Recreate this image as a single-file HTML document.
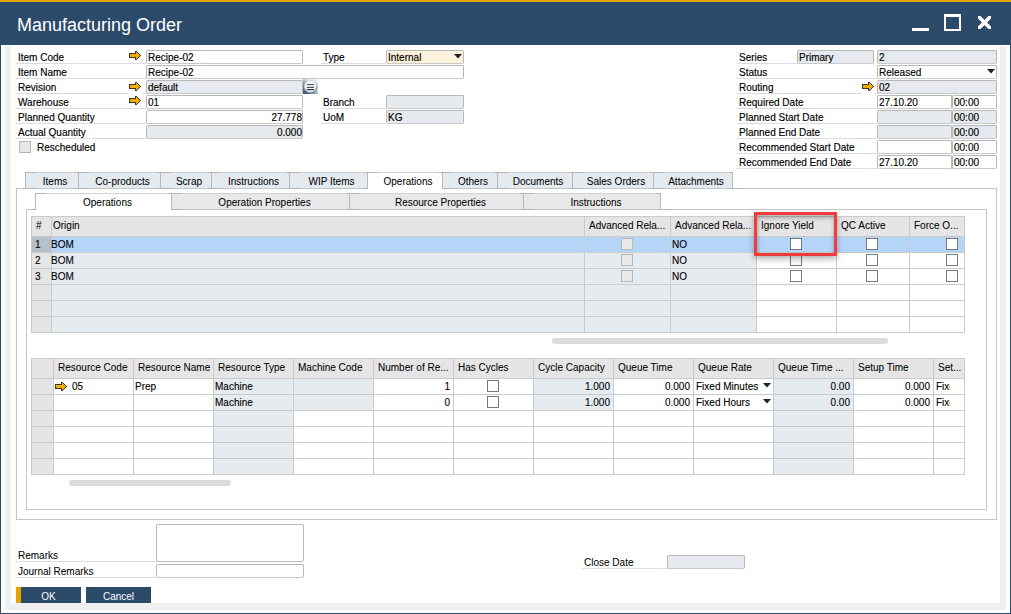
<!DOCTYPE html><html><head><meta charset="utf-8"><style>
*{margin:0;padding:0;box-sizing:border-box}
html,body{width:1011px;height:614px;overflow:hidden;background:#fff}
body{position:relative;font-family:"Liberation Sans",sans-serif;font-size:10px;color:#000}
.t,.ft{-webkit-text-stroke:0.15px #000}
.s{-webkit-text-stroke:0.05px #000}
.g{-webkit-text-stroke:0.1px #000}
div,svg{position:absolute}
.t{white-space:nowrap;line-height:16px;height:16px}
.fld{height:14px;border:1px solid #b8b8b8;border-bottom-color:#c9c9c9;border-radius:2px;overflow:hidden}
.ft{top:-1px;white-space:nowrap;line-height:16px}
</style></head><body>
<div style="left:0px;top:0px;width:1011px;height:614px;background:#2c4a6a"></div><div style="left:1px;top:45px;width:1009px;height:568px;background:#fff"></div><div style="left:0px;top:0px;width:1011px;height:2px;background:#e8a200"></div><div style="left:5px;top:46px;width:6px;height:564px;background:#f0f0f0"></div><div style="left:1000px;top:46px;width:6px;height:564px;background:#f0f0f0"></div><div style="left:5px;top:603px;width:1001px;height:7px;background:#f0f0f0"></div><div style="left:17px;top:14px;font-size:18px;line-height:22px;color:#fff;white-space:nowrap">Manufacturing Order</div><div style="left:912px;top:28px;width:17px;height:3px;background:#fff"></div><div style="left:944px;top:14px;width:17px;height:17px;border:2px solid #fff;border-top-width:3px"></div><svg style="left:978px;top:16px" width="13" height="13" viewBox="0 0 13 13"><path d="M0 0L13 13M13 0L0 13" stroke="#fff" stroke-width="3.6"/></svg><div class="t " style="left:18px;top:50px">Item Code</div><div style="left:16px;top:63px;width:130px;height:1px;background:#d7dde3"></div><svg style="left:129px;top:51px" width="12" height="9" viewBox="0 0 12 9" shape-rendering="crispEdges"><rect x="6" y="0" width="2" height="1" fill="#3d342a"/><rect x="6" y="1" width="1" height="1" fill="#3d342a"/><rect x="7" y="1" width="1" height="1" fill="#f2ae00"/><rect x="8" y="1" width="1" height="1" fill="#3d342a"/><rect x="0" y="2" width="7" height="1" fill="#3d342a"/><rect x="7" y="2" width="2" height="1" fill="#f2ae00"/><rect x="9" y="2" width="1" height="1" fill="#3d342a"/><rect x="0" y="3" width="1" height="1" fill="#3d342a"/><rect x="1" y="3" width="9" height="1" fill="#f2ae00"/><rect x="10" y="3" width="1" height="1" fill="#3d342a"/><rect x="0" y="4" width="1" height="1" fill="#3d342a"/><rect x="1" y="4" width="10" height="1" fill="#f2ae00"/><rect x="11" y="4" width="1" height="1" fill="#3d342a"/><rect x="0" y="5" width="1" height="1" fill="#3d342a"/><rect x="1" y="5" width="9" height="1" fill="#f2ae00"/><rect x="10" y="5" width="1" height="1" fill="#3d342a"/><rect x="0" y="6" width="7" height="1" fill="#3d342a"/><rect x="7" y="6" width="2" height="1" fill="#f2ae00"/><rect x="9" y="6" width="1" height="1" fill="#3d342a"/><rect x="6" y="7" width="1" height="1" fill="#3d342a"/><rect x="7" y="7" width="1" height="1" fill="#f2ae00"/><rect x="8" y="7" width="1" height="1" fill="#3d342a"/><rect x="6" y="8" width="2" height="1" fill="#3d342a"/></svg><div class="fld" style="left:146px;top:50px;width:157px;background:#fff"><div class="ft" style="left:1px">Recipe-02</div></div><div class="t " style="left:18px;top:65px">Item Name</div><div style="left:16px;top:78px;width:130px;height:1px;background:#d7dde3"></div><div class="fld" style="left:146px;top:65px;width:318px;background:#fff"><div class="ft" style="left:1px">Recipe-02</div></div><div class="t " style="left:18px;top:80px">Revision</div><div style="left:16px;top:93px;width:112px;height:1px;background:#d7dde3"></div><div style="left:142px;top:93px;width:4px;height:1px;background:#d7dde3"></div><svg style="left:129px;top:82px" width="12" height="9" viewBox="0 0 12 9" shape-rendering="crispEdges"><rect x="6" y="0" width="2" height="1" fill="#3d342a"/><rect x="6" y="1" width="1" height="1" fill="#3d342a"/><rect x="7" y="1" width="1" height="1" fill="#f2ae00"/><rect x="8" y="1" width="1" height="1" fill="#3d342a"/><rect x="0" y="2" width="7" height="1" fill="#3d342a"/><rect x="7" y="2" width="2" height="1" fill="#f2ae00"/><rect x="9" y="2" width="1" height="1" fill="#3d342a"/><rect x="0" y="3" width="1" height="1" fill="#3d342a"/><rect x="1" y="3" width="9" height="1" fill="#f2ae00"/><rect x="10" y="3" width="1" height="1" fill="#3d342a"/><rect x="0" y="4" width="1" height="1" fill="#3d342a"/><rect x="1" y="4" width="10" height="1" fill="#f2ae00"/><rect x="11" y="4" width="1" height="1" fill="#3d342a"/><rect x="0" y="5" width="1" height="1" fill="#3d342a"/><rect x="1" y="5" width="9" height="1" fill="#f2ae00"/><rect x="10" y="5" width="1" height="1" fill="#3d342a"/><rect x="0" y="6" width="7" height="1" fill="#3d342a"/><rect x="7" y="6" width="2" height="1" fill="#f2ae00"/><rect x="9" y="6" width="1" height="1" fill="#3d342a"/><rect x="6" y="7" width="1" height="1" fill="#3d342a"/><rect x="7" y="7" width="1" height="1" fill="#f2ae00"/><rect x="8" y="7" width="1" height="1" fill="#3d342a"/><rect x="6" y="8" width="2" height="1" fill="#3d342a"/></svg><div class="fld" style="left:146px;top:80px;width:157px;background:#e6eaee"><div class="ft" style="left:1px">default</div></div><div class="t " style="left:18px;top:95px">Warehouse</div><div style="left:16px;top:108px;width:130px;height:1px;background:#d7dde3"></div><svg style="left:129px;top:96px" width="12" height="9" viewBox="0 0 12 9" shape-rendering="crispEdges"><rect x="6" y="0" width="2" height="1" fill="#3d342a"/><rect x="6" y="1" width="1" height="1" fill="#3d342a"/><rect x="7" y="1" width="1" height="1" fill="#f2ae00"/><rect x="8" y="1" width="1" height="1" fill="#3d342a"/><rect x="0" y="2" width="7" height="1" fill="#3d342a"/><rect x="7" y="2" width="2" height="1" fill="#f2ae00"/><rect x="9" y="2" width="1" height="1" fill="#3d342a"/><rect x="0" y="3" width="1" height="1" fill="#3d342a"/><rect x="1" y="3" width="9" height="1" fill="#f2ae00"/><rect x="10" y="3" width="1" height="1" fill="#3d342a"/><rect x="0" y="4" width="1" height="1" fill="#3d342a"/><rect x="1" y="4" width="10" height="1" fill="#f2ae00"/><rect x="11" y="4" width="1" height="1" fill="#3d342a"/><rect x="0" y="5" width="1" height="1" fill="#3d342a"/><rect x="1" y="5" width="9" height="1" fill="#f2ae00"/><rect x="10" y="5" width="1" height="1" fill="#3d342a"/><rect x="0" y="6" width="7" height="1" fill="#3d342a"/><rect x="7" y="6" width="2" height="1" fill="#f2ae00"/><rect x="9" y="6" width="1" height="1" fill="#3d342a"/><rect x="6" y="7" width="1" height="1" fill="#3d342a"/><rect x="7" y="7" width="1" height="1" fill="#f2ae00"/><rect x="8" y="7" width="1" height="1" fill="#3d342a"/><rect x="6" y="8" width="2" height="1" fill="#3d342a"/></svg><div class="fld" style="left:146px;top:95px;width:157px;background:#fff"><div class="ft" style="left:1px">01</div></div><div class="t " style="left:18px;top:110px">Planned Quantity</div><div style="left:16px;top:123px;width:130px;height:1px;background:#d7dde3"></div><div class="fld" style="left:146px;top:110px;width:157px;background:#fff"><div class="ft" style="right:0px">27.778</div></div><div class="t " style="left:18px;top:125px">Actual Quantity</div><div style="left:16px;top:138px;width:130px;height:1px;background:#d7dde3"></div><div class="fld" style="left:146px;top:125px;width:157px;background:#e6eaee"><div class="ft" style="right:0px">0.000</div></div><div style="left:19px;top:141px;width:12px;height:12px;background:#e8e8e8;border:1px solid #b4b4b4"></div><div class="t" style="left:37px;top:140px;">Rescheduled</div><svg style="left:303px;top:79px" width="15" height="15" viewBox="0 0 15 15"><defs><linearGradient id="lbg" x1="0" y1="1" x2="1" y2="0"><stop offset="0" stop-color="#2d4865"/><stop offset="0.4" stop-color="#8c9db0"/><stop offset="0.65" stop-color="#e3e9ef"/><stop offset="1" stop-color="#eef2f6"/></linearGradient><radialGradient id="lcf" cx="0.45" cy="0.35" r="0.65"><stop offset="0" stop-color="#ffffff"/><stop offset="0.6" stop-color="#f0f3f7"/><stop offset="1" stop-color="#c4cfda"/></radialGradient></defs><rect width="15" height="15" fill="url(#lbg)"/><linearGradient id="lst" x1="0.2" y1="0" x2="0.8" y2="1"><stop offset="0" stop-color="#dfe5ec"/><stop offset="0.5" stop-color="#b9c4cf"/><stop offset="1" stop-color="#4d5e70"/></linearGradient><circle cx="7.8" cy="7.6" r="6.3" fill="url(#lcf)" stroke="url(#lst)" stroke-width="1"/><rect x="4" y="5" width="7" height="1.1" fill="#48525e"/><rect x="4" y="7.8" width="7" height="1.1" fill="#3a4350"/><rect x="4" y="10" width="7" height="1.1" fill="#342e40"/></svg><div class="t " style="left:323px;top:50px">Type</div><div style="left:321px;top:63px;width:65px;height:1px;background:#d7dde3"></div><div class="fld" style="left:386px;top:50px;width:78px;background:#fdf2dc"><div class="ft" style="left:1px">Internal</div></div><svg style="left:454px;top:54px" width="8" height="5" viewBox="0 0 8 5"><path d="M0 0H8L4 4.5Z" fill="#222"/></svg><div class="t " style="left:323px;top:95px">Branch</div><div style="left:321px;top:108px;width:65px;height:1px;background:#d7dde3"></div><div class="fld" style="left:386px;top:95px;width:78px;background:#e6eaee"></div><div class="t " style="left:323px;top:110px">UoM</div><div style="left:321px;top:123px;width:65px;height:1px;background:#d7dde3"></div><div class="fld" style="left:386px;top:110px;width:78px;background:#e6eaee"><div class="ft" style="left:1px">KG</div></div><div class="t " style="left:739px;top:50px">Series</div><div style="left:737px;top:63px;width:60px;height:1px;background:#d7dde3"></div><div class="fld" style="left:797px;top:50px;width:77px;background:#e6eaee"><div class="ft" style="left:1px">Primary</div></div><div class="fld" style="left:877px;top:50px;width:120px;background:#e6eaee"><div class="ft" style="left:1px">2</div></div><div class="t " style="left:739px;top:65px">Status</div><div style="left:737px;top:78px;width:140px;height:1px;background:#d7dde3"></div><div class="fld" style="left:877px;top:65px;width:120px;background:#fff"><div class="ft" style="left:1px">Released</div></div><svg style="left:987px;top:69px" width="8" height="5" viewBox="0 0 8 5"><path d="M0 0H8L4 4.5Z" fill="#222"/></svg><div class="t " style="left:739px;top:80px">Routing</div><div style="left:737px;top:93px;width:125px;height:1px;background:#d7dde3"></div><svg style="left:862px;top:82px" width="12" height="9" viewBox="0 0 12 9" shape-rendering="crispEdges"><rect x="6" y="0" width="2" height="1" fill="#3d342a"/><rect x="6" y="1" width="1" height="1" fill="#3d342a"/><rect x="7" y="1" width="1" height="1" fill="#f2ae00"/><rect x="8" y="1" width="1" height="1" fill="#3d342a"/><rect x="0" y="2" width="7" height="1" fill="#3d342a"/><rect x="7" y="2" width="2" height="1" fill="#f2ae00"/><rect x="9" y="2" width="1" height="1" fill="#3d342a"/><rect x="0" y="3" width="1" height="1" fill="#3d342a"/><rect x="1" y="3" width="9" height="1" fill="#f2ae00"/><rect x="10" y="3" width="1" height="1" fill="#3d342a"/><rect x="0" y="4" width="1" height="1" fill="#3d342a"/><rect x="1" y="4" width="10" height="1" fill="#f2ae00"/><rect x="11" y="4" width="1" height="1" fill="#3d342a"/><rect x="0" y="5" width="1" height="1" fill="#3d342a"/><rect x="1" y="5" width="9" height="1" fill="#f2ae00"/><rect x="10" y="5" width="1" height="1" fill="#3d342a"/><rect x="0" y="6" width="7" height="1" fill="#3d342a"/><rect x="7" y="6" width="2" height="1" fill="#f2ae00"/><rect x="9" y="6" width="1" height="1" fill="#3d342a"/><rect x="6" y="7" width="1" height="1" fill="#3d342a"/><rect x="7" y="7" width="1" height="1" fill="#f2ae00"/><rect x="8" y="7" width="1" height="1" fill="#3d342a"/><rect x="6" y="8" width="2" height="1" fill="#3d342a"/></svg><div style="left:875px;top:93px;width:2px;height:1px;background:#d7dde3"></div><div class="fld" style="left:877px;top:80px;width:120px;background:#e6eaee"><div class="ft" style="left:1px">02</div></div><div class="t " style="left:739px;top:95px">Required Date</div><div style="left:737px;top:108px;width:140px;height:1px;background:#d7dde3"></div><div class="fld" style="left:877px;top:95px;width:75px;background:#fff"><div class="ft" style="left:1px">27.10.20</div></div><div class="fld" style="left:952px;top:95px;width:45px;background:#fff"><div class="ft" style="left:1px">00:00</div></div><div class="t " style="left:739px;top:110px">Planned Start Date</div><div style="left:737px;top:123px;width:140px;height:1px;background:#d7dde3"></div><div class="fld" style="left:877px;top:110px;width:75px;background:#e6eaee"></div><div class="fld" style="left:952px;top:110px;width:45px;background:#e6eaee"><div class="ft" style="left:1px">00:00</div></div><div class="t " style="left:739px;top:125px">Planned End Date</div><div style="left:737px;top:138px;width:140px;height:1px;background:#d7dde3"></div><div class="fld" style="left:877px;top:125px;width:75px;background:#e6eaee"></div><div class="fld" style="left:952px;top:125px;width:45px;background:#e6eaee"><div class="ft" style="left:1px">00:00</div></div><div class="t " style="left:739px;top:140px">Recommended Start Date</div><div style="left:737px;top:153px;width:140px;height:1px;background:#d7dde3"></div><div class="fld" style="left:877px;top:140px;width:75px;background:#fff"></div><div class="fld" style="left:952px;top:140px;width:45px;background:#fff"><div class="ft" style="left:1px">00:00</div></div><div class="t " style="left:739px;top:155px">Recommended End Date</div><div style="left:737px;top:168px;width:140px;height:1px;background:#d7dde3"></div><div class="fld" style="left:877px;top:155px;width:75px;background:#fff"><div class="ft" style="left:1px">27.10.20</div></div><div class="fld" style="left:952px;top:155px;width:45px;background:#fff"><div class="ft" style="left:1px">00:00</div></div><div style="left:16px;top:188px;width:981px;height:332px;border:1px solid #c6c6c6"></div><div style="left:25px;top:172px;width:54px;height:16px;background:#e5eaef;border:1px solid #b9b9b9;border-top-color:#d3d3d3;border-bottom:none"><div class="t s" style="left:0;right:0;top:1px;text-align:center;padding-left:6px">Items</div></div><div style="left:78px;top:172px;width:83px;height:16px;background:#e5eaef;border:1px solid #b9b9b9;border-top-color:#d3d3d3;border-bottom:none"><div class="t s" style="left:0;right:0;top:1px;text-align:center;padding-left:6px">Co-products</div></div><div style="left:160px;top:172px;width:52px;height:16px;background:#e5eaef;border:1px solid #b9b9b9;border-top-color:#d3d3d3;border-bottom:none"><div class="t s" style="left:0;right:0;top:1px;text-align:center;padding-left:6px">Scrap</div></div><div style="left:211px;top:172px;width:79px;height:16px;background:#e5eaef;border:1px solid #b9b9b9;border-top-color:#d3d3d3;border-bottom:none"><div class="t s" style="left:0;right:0;top:1px;text-align:center;padding-left:6px">Instructions</div></div><div style="left:289px;top:172px;width:79px;height:16px;background:#e5eaef;border:1px solid #b9b9b9;border-top-color:#d3d3d3;border-bottom:none"><div class="t s" style="left:0;right:0;top:1px;text-align:center;padding-left:6px">WIP Items</div></div><div style="left:367px;top:172px;width:76px;height:17px;background:#fff;border:1px solid #b9b9b9;border-top-color:#d3d3d3;border-bottom:none"><div class="t s" style="left:0;right:0;top:1px;text-align:center;padding-left:6px">Operations</div></div><div style="left:442px;top:172px;width:56px;height:16px;background:#e5eaef;border:1px solid #b9b9b9;border-top-color:#d3d3d3;border-bottom:none"><div class="t s" style="left:0;right:0;top:1px;text-align:center;padding-left:6px">Others</div></div><div style="left:497px;top:172px;width:76px;height:16px;background:#e5eaef;border:1px solid #b9b9b9;border-top-color:#d3d3d3;border-bottom:none"><div class="t s" style="left:0;right:0;top:1px;text-align:center;padding-left:6px">Documents</div></div><div style="left:572px;top:172px;width:82px;height:16px;background:#e5eaef;border:1px solid #b9b9b9;border-top-color:#d3d3d3;border-bottom:none"><div class="t s" style="left:0;right:0;top:1px;text-align:center;padding-left:6px">Sales Orders</div></div><div style="left:653px;top:172px;width:80px;height:16px;background:#e5eaef;border:1px solid #b9b9b9;border-top-color:#d3d3d3;border-bottom:none"><div class="t s" style="left:0;right:0;top:1px;text-align:center;padding-left:6px">Attachments</div></div><div style="left:25px;top:172px;width:11px;height:1px;background:#b4b4b4"></div><div style="left:22px;top:188px;width:14px;height:1px;background:#b4b4b4"></div><div style="left:75px;top:172px;width:14px;height:1px;background:#b4b4b4"></div><div style="left:75px;top:188px;width:14px;height:1px;background:#b4b4b4"></div><div style="left:157px;top:172px;width:14px;height:1px;background:#b4b4b4"></div><div style="left:157px;top:188px;width:14px;height:1px;background:#b4b4b4"></div><div style="left:208px;top:172px;width:14px;height:1px;background:#b4b4b4"></div><div style="left:208px;top:188px;width:14px;height:1px;background:#b4b4b4"></div><div style="left:286px;top:172px;width:14px;height:1px;background:#b4b4b4"></div><div style="left:286px;top:188px;width:14px;height:1px;background:#b4b4b4"></div><div style="left:364px;top:172px;width:14px;height:1px;background:#b4b4b4"></div><div style="left:364px;top:188px;width:14px;height:1px;background:#b4b4b4"></div><div style="left:439px;top:172px;width:14px;height:1px;background:#b4b4b4"></div><div style="left:439px;top:188px;width:14px;height:1px;background:#b4b4b4"></div><div style="left:494px;top:172px;width:14px;height:1px;background:#b4b4b4"></div><div style="left:494px;top:188px;width:14px;height:1px;background:#b4b4b4"></div><div style="left:569px;top:172px;width:14px;height:1px;background:#b4b4b4"></div><div style="left:569px;top:188px;width:14px;height:1px;background:#b4b4b4"></div><div style="left:650px;top:172px;width:14px;height:1px;background:#b4b4b4"></div><div style="left:650px;top:188px;width:14px;height:1px;background:#b4b4b4"></div><div style="left:729px;top:172px;width:4px;height:1px;background:#b4b4b4"></div><div style="left:729px;top:188px;width:14px;height:1px;background:#b4b4b4"></div><div style="left:368px;top:188px;width:74px;height:1px;background:#fff"></div><div style="left:26px;top:209px;width:961px;height:301px;border:1px solid #c6c6c6"></div><div style="left:35px;top:193px;width:137px;height:17px;background:#fff;border:1px solid #b9b9b9;border-top-color:#d3d3d3;border-bottom:none"><div class="t s" style="left:0;right:0;top:1px;text-align:center;padding-left:8px">Operations</div></div><div style="left:171px;top:193px;width:179px;height:16px;background:#e8e8e8;border:1px solid #b9b9b9;border-top-color:#d3d3d3;border-bottom:none"><div class="t s" style="left:0;right:0;top:1px;text-align:center;padding-left:8px">Operation Properties</div></div><div style="left:349px;top:193px;width:175px;height:16px;background:#e8e8e8;border:1px solid #b9b9b9;border-top-color:#d3d3d3;border-bottom:none"><div class="t s" style="left:0;right:0;top:1px;text-align:center;padding-left:8px">Resource Properties</div></div><div style="left:523px;top:193px;width:138px;height:16px;background:#e8e8e8;border:1px solid #b9b9b9;border-top-color:#d3d3d3;border-bottom:none"><div class="t s" style="left:0;right:0;top:1px;text-align:center;padding-left:8px">Instructions</div></div><div style="left:35px;top:193px;width:11px;height:1px;background:#b4b4b4"></div><div style="left:32px;top:209px;width:14px;height:1px;background:#b4b4b4"></div><div style="left:168px;top:193px;width:14px;height:1px;background:#b4b4b4"></div><div style="left:168px;top:209px;width:14px;height:1px;background:#b4b4b4"></div><div style="left:346px;top:193px;width:14px;height:1px;background:#b4b4b4"></div><div style="left:346px;top:209px;width:14px;height:1px;background:#b4b4b4"></div><div style="left:520px;top:193px;width:14px;height:1px;background:#b4b4b4"></div><div style="left:520px;top:209px;width:14px;height:1px;background:#b4b4b4"></div><div style="left:657px;top:193px;width:4px;height:1px;background:#b4b4b4"></div><div style="left:657px;top:209px;width:14px;height:1px;background:#b4b4b4"></div><div style="left:36px;top:209px;width:135px;height:1px;background:#fff"></div><div style="left:31px;top:236px;width:20px;height:16px;background:#b6c0ca"></div><div style="left:31px;top:252px;width:20px;height:16px;background:#e5e5e5"></div><div style="left:31px;top:268px;width:20px;height:16px;background:#e5e5e5"></div><div style="left:31px;top:284px;width:20px;height:16px;background:#e5e5e5"></div><div style="left:31px;top:300px;width:20px;height:16px;background:#e5e5e5"></div><div style="left:31px;top:316px;width:20px;height:16px;background:#e5e5e5"></div><div style="left:51px;top:236px;width:533px;height:16px;background:#b4d4f8"></div><div style="left:51px;top:252px;width:533px;height:16px;background:#e6ebf0"></div><div style="left:51px;top:268px;width:533px;height:16px;background:#e6ebf0"></div><div style="left:51px;top:284px;width:533px;height:16px;background:#e6ebf0"></div><div style="left:51px;top:300px;width:533px;height:16px;background:#e6ebf0"></div><div style="left:51px;top:316px;width:533px;height:16px;background:#e6ebf0"></div><div style="left:584px;top:236px;width:86px;height:16px;background:#b4d4f8"></div><div style="left:584px;top:252px;width:86px;height:16px;background:#e6ebf0"></div><div style="left:584px;top:268px;width:86px;height:16px;background:#e6ebf0"></div><div style="left:584px;top:284px;width:86px;height:16px;background:#e6ebf0"></div><div style="left:584px;top:300px;width:86px;height:16px;background:#e6ebf0"></div><div style="left:584px;top:316px;width:86px;height:16px;background:#e6ebf0"></div><div style="left:670px;top:236px;width:86px;height:16px;background:#b4d4f8"></div><div style="left:670px;top:252px;width:86px;height:16px;background:#e6ebf0"></div><div style="left:670px;top:268px;width:86px;height:16px;background:#e6ebf0"></div><div style="left:670px;top:284px;width:86px;height:16px;background:#e6ebf0"></div><div style="left:670px;top:300px;width:86px;height:16px;background:#e6ebf0"></div><div style="left:670px;top:316px;width:86px;height:16px;background:#e6ebf0"></div><div style="left:756px;top:236px;width:80px;height:16px;background:#b4d4f8"></div><div style="left:756px;top:252px;width:80px;height:16px;background:#fff"></div><div style="left:756px;top:268px;width:80px;height:16px;background:#fff"></div><div style="left:756px;top:284px;width:80px;height:16px;background:#fff"></div><div style="left:756px;top:300px;width:80px;height:16px;background:#fff"></div><div style="left:756px;top:316px;width:80px;height:16px;background:#fff"></div><div style="left:836px;top:236px;width:73px;height:16px;background:#b4d4f8"></div><div style="left:836px;top:252px;width:73px;height:16px;background:#fff"></div><div style="left:836px;top:268px;width:73px;height:16px;background:#fff"></div><div style="left:836px;top:284px;width:73px;height:16px;background:#fff"></div><div style="left:836px;top:300px;width:73px;height:16px;background:#fff"></div><div style="left:836px;top:316px;width:73px;height:16px;background:#fff"></div><div style="left:909px;top:236px;width:55px;height:16px;background:#b4d4f8"></div><div style="left:909px;top:252px;width:55px;height:16px;background:#fff"></div><div style="left:909px;top:268px;width:55px;height:16px;background:#fff"></div><div style="left:909px;top:284px;width:55px;height:16px;background:#fff"></div><div style="left:909px;top:300px;width:55px;height:16px;background:#fff"></div><div style="left:909px;top:316px;width:55px;height:16px;background:#fff"></div><div style="left:31px;top:216px;width:933px;height:20px;background:#e5e5e5"></div><div style="left:31px;top:216px;width:1px;height:117px;background:#cbcbcb"></div><div style="left:51px;top:216px;width:1px;height:117px;background:#cbcbcb"></div><div style="left:584px;top:216px;width:1px;height:117px;background:#cbcbcb"></div><div style="left:670px;top:216px;width:1px;height:117px;background:#cbcbcb"></div><div style="left:756px;top:216px;width:1px;height:117px;background:#cbcbcb"></div><div style="left:836px;top:216px;width:1px;height:117px;background:#cbcbcb"></div><div style="left:909px;top:216px;width:1px;height:117px;background:#cbcbcb"></div><div style="left:964px;top:216px;width:1px;height:117px;background:#cbcbcb"></div><div style="left:31px;top:216px;width:934px;height:1px;background:#cbcbcb"></div><div style="left:31px;top:236px;width:934px;height:1px;background:#cbcbcb"></div><div style="left:31px;top:252px;width:934px;height:1px;background:#cbcbcb"></div><div style="left:31px;top:268px;width:934px;height:1px;background:#cbcbcb"></div><div style="left:31px;top:284px;width:934px;height:1px;background:#cbcbcb"></div><div style="left:31px;top:300px;width:934px;height:1px;background:#cbcbcb"></div><div style="left:31px;top:316px;width:934px;height:1px;background:#cbcbcb"></div><div style="left:31px;top:332px;width:934px;height:1px;background:#cbcbcb"></div><div class="t s" style="left:36px;top:218px;width:14px;overflow:hidden">#</div><div class="t s" style="left:53px;top:218px;width:530px;overflow:hidden">Origin</div><div class="t s" style="left:589px;top:218px;width:80px;overflow:hidden">Advanced Rela...</div><div class="t s" style="left:675px;top:218px;width:80px;overflow:hidden">Advanced Rela...</div><div class="t s" style="left:761px;top:218px;width:74px;overflow:hidden">Ignore Yield</div><div class="t s" style="left:841px;top:218px;width:67px;overflow:hidden">QC Active</div><div class="t s" style="left:914px;top:218px;width:49px;overflow:hidden">Force O...</div><div class="t g" style="left:35px;top:237px;">1</div><div class="t g" style="left:51px;top:237px;">BOM</div><div class="t g" style="left:672px;top:237px;">NO</div><div style="left:621px;top:238px;width:12px;height:12px;background:#e8e8e8;border:1px solid #b8b8b8"></div><div style="left:790px;top:238px;width:12px;height:12px;background:#fff;border:1px solid #737980"></div><div style="left:866px;top:238px;width:12px;height:12px;background:#fff;border:1px solid #737980"></div><div style="left:946px;top:238px;width:12px;height:12px;background:#fff;border:1px solid #737980"></div><div class="t g" style="left:35px;top:253px;">2</div><div class="t g" style="left:51px;top:253px;">BOM</div><div class="t g" style="left:672px;top:253px;">NO</div><div style="left:621px;top:254px;width:12px;height:12px;background:#e8e8e8;border:1px solid #b8b8b8"></div><div style="left:790px;top:254px;width:12px;height:12px;background:#fff;border:1px solid #737980"></div><div style="left:866px;top:254px;width:12px;height:12px;background:#fff;border:1px solid #737980"></div><div style="left:946px;top:254px;width:12px;height:12px;background:#fff;border:1px solid #737980"></div><div class="t g" style="left:35px;top:269px;">3</div><div class="t g" style="left:51px;top:269px;">BOM</div><div class="t g" style="left:672px;top:269px;">NO</div><div style="left:621px;top:270px;width:12px;height:12px;background:#e8e8e8;border:1px solid #b8b8b8"></div><div style="left:790px;top:270px;width:12px;height:12px;background:#fff;border:1px solid #737980"></div><div style="left:866px;top:270px;width:12px;height:12px;background:#fff;border:1px solid #737980"></div><div style="left:946px;top:270px;width:12px;height:12px;background:#fff;border:1px solid #737980"></div><div style="left:552px;top:338px;width:336px;height:6px;background:#dcdcdc;border-radius:3px"></div><div style="left:31px;top:378px;width:22px;height:16px;background:#e5e5e5"></div><div style="left:31px;top:394px;width:22px;height:16px;background:#e5e5e5"></div><div style="left:31px;top:410px;width:22px;height:16px;background:#e5e5e5"></div><div style="left:31px;top:426px;width:22px;height:16px;background:#e5e5e5"></div><div style="left:31px;top:442px;width:22px;height:16px;background:#e5e5e5"></div><div style="left:31px;top:458px;width:22px;height:16px;background:#e5e5e5"></div><div style="left:53px;top:378px;width:80px;height:16px;background:#fff"></div><div style="left:53px;top:394px;width:80px;height:16px;background:#fff"></div><div style="left:53px;top:410px;width:80px;height:16px;background:#fff"></div><div style="left:53px;top:426px;width:80px;height:16px;background:#fff"></div><div style="left:53px;top:442px;width:80px;height:16px;background:#fff"></div><div style="left:53px;top:458px;width:80px;height:16px;background:#fff"></div><div style="left:133px;top:378px;width:80px;height:16px;background:#fff"></div><div style="left:133px;top:394px;width:80px;height:16px;background:#fff"></div><div style="left:133px;top:410px;width:80px;height:16px;background:#fff"></div><div style="left:133px;top:426px;width:80px;height:16px;background:#fff"></div><div style="left:133px;top:442px;width:80px;height:16px;background:#fff"></div><div style="left:133px;top:458px;width:80px;height:16px;background:#fff"></div><div style="left:213px;top:378px;width:80px;height:16px;background:#e6ebf0"></div><div style="left:213px;top:394px;width:80px;height:16px;background:#e6ebf0"></div><div style="left:213px;top:410px;width:80px;height:16px;background:#e6ebf0"></div><div style="left:213px;top:426px;width:80px;height:16px;background:#e6ebf0"></div><div style="left:213px;top:442px;width:80px;height:16px;background:#e6ebf0"></div><div style="left:213px;top:458px;width:80px;height:16px;background:#e6ebf0"></div><div style="left:293px;top:378px;width:80px;height:16px;background:#e6ebf0"></div><div style="left:293px;top:394px;width:80px;height:16px;background:#e6ebf0"></div><div style="left:293px;top:410px;width:80px;height:16px;background:#fff"></div><div style="left:293px;top:426px;width:80px;height:16px;background:#fff"></div><div style="left:293px;top:442px;width:80px;height:16px;background:#fff"></div><div style="left:293px;top:458px;width:80px;height:16px;background:#fff"></div><div style="left:373px;top:378px;width:80px;height:16px;background:#fff"></div><div style="left:373px;top:394px;width:80px;height:16px;background:#fff"></div><div style="left:373px;top:410px;width:80px;height:16px;background:#fff"></div><div style="left:373px;top:426px;width:80px;height:16px;background:#fff"></div><div style="left:373px;top:442px;width:80px;height:16px;background:#fff"></div><div style="left:373px;top:458px;width:80px;height:16px;background:#fff"></div><div style="left:453px;top:378px;width:80px;height:16px;background:#fff"></div><div style="left:453px;top:394px;width:80px;height:16px;background:#fff"></div><div style="left:453px;top:410px;width:80px;height:16px;background:#fff"></div><div style="left:453px;top:426px;width:80px;height:16px;background:#fff"></div><div style="left:453px;top:442px;width:80px;height:16px;background:#fff"></div><div style="left:453px;top:458px;width:80px;height:16px;background:#fff"></div><div style="left:533px;top:378px;width:80px;height:16px;background:#e6ebf0"></div><div style="left:533px;top:394px;width:80px;height:16px;background:#e6ebf0"></div><div style="left:533px;top:410px;width:80px;height:16px;background:#fff"></div><div style="left:533px;top:426px;width:80px;height:16px;background:#fff"></div><div style="left:533px;top:442px;width:80px;height:16px;background:#fff"></div><div style="left:533px;top:458px;width:80px;height:16px;background:#fff"></div><div style="left:613px;top:378px;width:80px;height:16px;background:#fff"></div><div style="left:613px;top:394px;width:80px;height:16px;background:#fff"></div><div style="left:613px;top:410px;width:80px;height:16px;background:#fff"></div><div style="left:613px;top:426px;width:80px;height:16px;background:#fff"></div><div style="left:613px;top:442px;width:80px;height:16px;background:#fff"></div><div style="left:613px;top:458px;width:80px;height:16px;background:#fff"></div><div style="left:693px;top:378px;width:80px;height:16px;background:#fff"></div><div style="left:693px;top:394px;width:80px;height:16px;background:#fff"></div><div style="left:693px;top:410px;width:80px;height:16px;background:#fff"></div><div style="left:693px;top:426px;width:80px;height:16px;background:#fff"></div><div style="left:693px;top:442px;width:80px;height:16px;background:#fff"></div><div style="left:693px;top:458px;width:80px;height:16px;background:#fff"></div><div style="left:773px;top:378px;width:80px;height:16px;background:#e6ebf0"></div><div style="left:773px;top:394px;width:80px;height:16px;background:#e6ebf0"></div><div style="left:773px;top:410px;width:80px;height:16px;background:#e6ebf0"></div><div style="left:773px;top:426px;width:80px;height:16px;background:#e6ebf0"></div><div style="left:773px;top:442px;width:80px;height:16px;background:#e6ebf0"></div><div style="left:773px;top:458px;width:80px;height:16px;background:#e6ebf0"></div><div style="left:853px;top:378px;width:80px;height:16px;background:#fff"></div><div style="left:853px;top:394px;width:80px;height:16px;background:#fff"></div><div style="left:853px;top:410px;width:80px;height:16px;background:#fff"></div><div style="left:853px;top:426px;width:80px;height:16px;background:#fff"></div><div style="left:853px;top:442px;width:80px;height:16px;background:#fff"></div><div style="left:853px;top:458px;width:80px;height:16px;background:#fff"></div><div style="left:933px;top:378px;width:31px;height:16px;background:#fff"></div><div style="left:933px;top:394px;width:31px;height:16px;background:#fff"></div><div style="left:933px;top:410px;width:31px;height:16px;background:#fff"></div><div style="left:933px;top:426px;width:31px;height:16px;background:#fff"></div><div style="left:933px;top:442px;width:31px;height:16px;background:#fff"></div><div style="left:933px;top:458px;width:31px;height:16px;background:#fff"></div><div style="left:31px;top:358px;width:933px;height:20px;background:#e5e5e5"></div><div style="left:31px;top:358px;width:1px;height:117px;background:#cbcbcb"></div><div style="left:53px;top:358px;width:1px;height:117px;background:#cbcbcb"></div><div style="left:133px;top:358px;width:1px;height:117px;background:#cbcbcb"></div><div style="left:213px;top:358px;width:1px;height:117px;background:#cbcbcb"></div><div style="left:293px;top:358px;width:1px;height:117px;background:#cbcbcb"></div><div style="left:373px;top:358px;width:1px;height:117px;background:#cbcbcb"></div><div style="left:453px;top:358px;width:1px;height:117px;background:#cbcbcb"></div><div style="left:533px;top:358px;width:1px;height:117px;background:#cbcbcb"></div><div style="left:613px;top:358px;width:1px;height:117px;background:#cbcbcb"></div><div style="left:693px;top:358px;width:1px;height:117px;background:#cbcbcb"></div><div style="left:773px;top:358px;width:1px;height:117px;background:#cbcbcb"></div><div style="left:853px;top:358px;width:1px;height:117px;background:#cbcbcb"></div><div style="left:933px;top:358px;width:1px;height:117px;background:#cbcbcb"></div><div style="left:964px;top:358px;width:1px;height:117px;background:#cbcbcb"></div><div style="left:31px;top:358px;width:934px;height:1px;background:#cbcbcb"></div><div style="left:31px;top:378px;width:934px;height:1px;background:#cbcbcb"></div><div style="left:31px;top:394px;width:934px;height:1px;background:#cbcbcb"></div><div style="left:31px;top:410px;width:934px;height:1px;background:#cbcbcb"></div><div style="left:31px;top:426px;width:934px;height:1px;background:#cbcbcb"></div><div style="left:31px;top:442px;width:934px;height:1px;background:#cbcbcb"></div><div style="left:31px;top:458px;width:934px;height:1px;background:#cbcbcb"></div><div style="left:31px;top:474px;width:934px;height:1px;background:#cbcbcb"></div><div class="t s" style="left:58px;top:360px;width:74px;overflow:hidden">Resource Code</div><div class="t s" style="left:138px;top:360px;width:74px;overflow:hidden">Resource Name</div><div class="t s" style="left:218px;top:360px;width:74px;overflow:hidden">Resource Type</div><div class="t s" style="left:298px;top:360px;width:74px;overflow:hidden">Machine Code</div><div class="t s" style="left:378px;top:360px;width:74px;overflow:hidden">Number of Re...</div><div class="t s" style="left:458px;top:360px;width:74px;overflow:hidden">Has Cycles</div><div class="t s" style="left:538px;top:360px;width:74px;overflow:hidden">Cycle Capacity</div><div class="t s" style="left:618px;top:360px;width:74px;overflow:hidden">Queue Time</div><div class="t s" style="left:698px;top:360px;width:74px;overflow:hidden">Queue Rate</div><div class="t s" style="left:778px;top:360px;width:74px;overflow:hidden">Queue Time ...</div><div class="t s" style="left:858px;top:360px;width:74px;overflow:hidden">Setup Time</div><div class="t s" style="left:938px;top:360px;width:25px;overflow:hidden">Set...</div><svg style="left:55px;top:382px" width="12" height="9" viewBox="0 0 12 9" shape-rendering="crispEdges"><rect x="6" y="0" width="2" height="1" fill="#3d342a"/><rect x="6" y="1" width="1" height="1" fill="#3d342a"/><rect x="7" y="1" width="1" height="1" fill="#f2ae00"/><rect x="8" y="1" width="1" height="1" fill="#3d342a"/><rect x="0" y="2" width="7" height="1" fill="#3d342a"/><rect x="7" y="2" width="2" height="1" fill="#f2ae00"/><rect x="9" y="2" width="1" height="1" fill="#3d342a"/><rect x="0" y="3" width="1" height="1" fill="#3d342a"/><rect x="1" y="3" width="9" height="1" fill="#f2ae00"/><rect x="10" y="3" width="1" height="1" fill="#3d342a"/><rect x="0" y="4" width="1" height="1" fill="#3d342a"/><rect x="1" y="4" width="10" height="1" fill="#f2ae00"/><rect x="11" y="4" width="1" height="1" fill="#3d342a"/><rect x="0" y="5" width="1" height="1" fill="#3d342a"/><rect x="1" y="5" width="9" height="1" fill="#f2ae00"/><rect x="10" y="5" width="1" height="1" fill="#3d342a"/><rect x="0" y="6" width="7" height="1" fill="#3d342a"/><rect x="7" y="6" width="2" height="1" fill="#f2ae00"/><rect x="9" y="6" width="1" height="1" fill="#3d342a"/><rect x="6" y="7" width="1" height="1" fill="#3d342a"/><rect x="7" y="7" width="1" height="1" fill="#f2ae00"/><rect x="8" y="7" width="1" height="1" fill="#3d342a"/><rect x="6" y="8" width="2" height="1" fill="#3d342a"/></svg><div class="t g" style="left:72px;top:379px;">05</div><div class="t g" style="left:135px;top:379px;">Prep</div><div class="t g" style="left:215px;top:379px;">Machine</div><div class="t g" style="left:373px;top:379px;width:77px;text-align:right">1</div><div style="left:487px;top:380px;width:12px;height:12px;background:#fff;border:1px solid #737980"></div><div class="t g" style="left:533px;top:379px;width:77px;text-align:right">1.000</div><div class="t g" style="left:613px;top:379px;width:77px;text-align:right">0.000</div><div class="t g" style="left:696px;top:379px;">Fixed Minutes</div><svg style="left:763px;top:383px" width="8" height="5" viewBox="0 0 8 5"><path d="M0 0H8L4 4.5Z" fill="#222"/></svg><div class="t g" style="left:773px;top:379px;width:77px;text-align:right">0.00</div><div class="t g" style="left:853px;top:379px;width:77px;text-align:right">0.000</div><div class="t g" style="left:936px;top:379px;width:14px;overflow:hidden">Fixed</div><div class="t g" style="left:215px;top:395px;">Machine</div><div class="t g" style="left:373px;top:395px;width:77px;text-align:right">0</div><div style="left:487px;top:396px;width:12px;height:12px;background:#fff;border:1px solid #737980"></div><div class="t g" style="left:533px;top:395px;width:77px;text-align:right">1.000</div><div class="t g" style="left:613px;top:395px;width:77px;text-align:right">0.000</div><div class="t g" style="left:696px;top:395px;">Fixed Hours</div><svg style="left:763px;top:399px" width="8" height="5" viewBox="0 0 8 5"><path d="M0 0H8L4 4.5Z" fill="#222"/></svg><div class="t g" style="left:773px;top:395px;width:77px;text-align:right">0.00</div><div class="t g" style="left:853px;top:395px;width:77px;text-align:right">0.000</div><div class="t g" style="left:936px;top:395px;width:14px;overflow:hidden">Fixed</div><div style="left:69px;top:480px;width:162px;height:6px;background:#dcdcdc;border-radius:3px"></div><div class="t s" style="left:18px;top:548px">Remarks</div><div style="left:16px;top:561px;width:140px;height:1px;background:#d7dde3"></div><div style="left:156px;top:524px;width:148px;height:38px;border:1px solid #b8b8b8;border-radius:2px;background:#fff"></div><div class="t s" style="left:18px;top:564px">Journal Remarks</div><div style="left:16px;top:577px;width:140px;height:1px;background:#d7dde3"></div><div class="fld" style="left:156px;top:564px;width:148px;background:#fff"></div><div class="t s" style="left:584px;top:555px">Close Date</div><div style="left:582px;top:568px;width:85px;height:1px;background:#d7dde3"></div><div class="fld" style="left:667px;top:555px;width:78px;background:#e6eaee"></div><div style="left:16px;top:587px;width:65px;height:16px;background:#2c4a6a;border-left:5px solid #e8a200"><div class="t" style="left:-5px;right:0;top:2px;text-align:center;color:#fff;font-size:10px;-webkit-text-stroke:0">OK</div></div><div style="left:86px;top:587px;width:65px;height:16px;background:#2c4a6a"><div class="t" style="left:0;right:0;top:2px;text-align:center;color:#fff;font-size:10px;-webkit-text-stroke:0">Cancel</div></div><div style="left:754px;top:212px;width:83px;height:44px;border:3px solid #f03c3c;box-shadow:0 3px 6px rgba(0,0,0,0.3), inset 0 3px 4px rgba(0,0,0,0.28), inset 2px 0 3px rgba(0,0,0,0.08)"></div></body></html>
